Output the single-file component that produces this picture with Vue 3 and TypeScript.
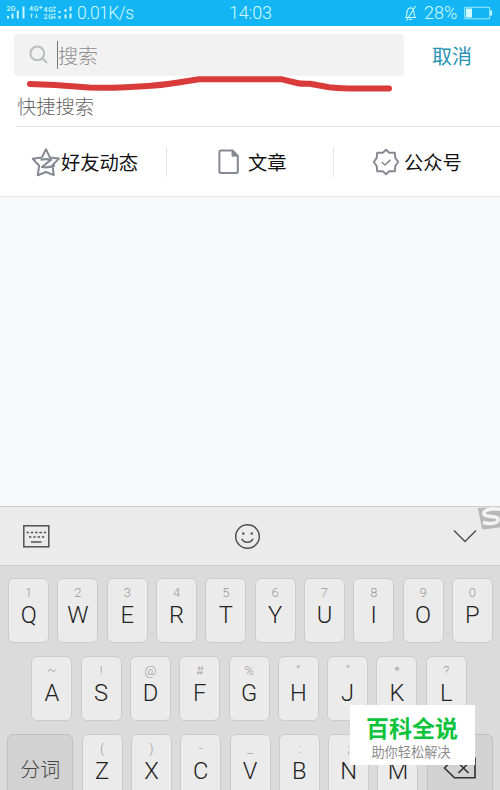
<script setup lang="ts">
interface Key {
  label: string
  hint: string
}

const makeRow = (letters: string, hints: string): Key[] =>
  [...letters].map((label, i) => ({ label, hint: [...hints][i] ?? '' }))

const topRow = makeRow('QWERTYUIOP', '1234567890')
const middleRow = makeRow('ASDFGHJKL', '~!@#%“"*?')
const bottomRow = makeRow('ZXCVBNM', '()-_:;')
</script>

<template>
  <div class="screen">
    <header class="status">
      <svg class="signal" width="71" height="26" viewBox="0 0 71 26">
        <g class="tiny">
          <text x="0.5" y="10.5" textLength="9">2G</text>
          <text x="23" y="11" textLength="9.5">4G</text>
          <text x="37.5" y="11.5" textLength="9.5">4G</text>
          <text x="37.5" y="18.5" textLength="9.5">2G</text>
        </g>
        <path class="arrows" d="M33 7.5h3.6M34.8 5.7v3.6" />
        <g class="bars">
          <path d="M2 16v2.5M6.5 13.5v5M11.8 10.5v8M17.5 6.5v12" />
          <path d="M48.5 6.5v2M48.5 10v1.5M48.5 13.5v1.5M48.5 16.5v2M53.5 11v2M53.5 16v2.5M59.5 9v3M59.5 14.5v4M64.5 6.5v4.5M64.5 13.5v5" />
        </g>
        <path class="arrows" d="M25.5 18v-4m-1.3 1.3 1.3-1.3 1.3 1.3M30.5 14v4m-1.3-1.3 1.3 1.3 1.3-1.3" />
      </svg>
      <span class="speed">0.01K/s</span>
      <span class="clock">14:03</span>
      <svg class="bell" width="15" height="17" viewBox="0 0 15 17">
        <path d="M2 12.5h11M3.3 12C4 10 3.5 5.5 5.3 3.8 6.8 2.4 9 2.7 10 4c1.4 2 .6 6 2 8M6 14.5h3M12.5 1 3.5 15.5" />
      </svg>
      <span class="percent">28%</span>
      <svg class="battery" width="29" height="14" viewBox="0 0 29 14">
        <rect x=".7" y="1.2" width="25" height="11.5" rx="1" class="outline" />
        <rect x="2" y="2.5" width="6" height="9" class="level" />
        <rect x="26.2" y="4.5" width="1.8" height="5" class="level" />
      </svg>
    </header>

    <section class="top">
      <div class="search-row">
        <div class="search-box">
          <svg class="magnifier" width="20" height="20" viewBox="0 0 20 20">
            <circle cx="8.3" cy="8.3" r="6.9" />
            <path d="m13.3 13.3 4.6 4.6" />
          </svg>
          <span class="caret"></span>
          <span class="placeholder">搜索</span>
        </div>
        <span class="cancel">取消</span>
      </div>
      <h2 class="quick">快捷搜索</h2>
      <svg class="scribble" width="380" height="20" viewBox="0 0 380 20">
        <path d="M10 10 35 11 69 13.6Q88 14 106 13.2L128 12Q145 10.8 160 8.2L179 5.2H261L277 9Q281 10 290 9.7L309 13.3Q318 14.5 330 14.4H369" />
      </svg>
    </section>

    <nav class="tabs">
      <a class="tab friends">
        <svg width="30" height="30" viewBox="0 0 30 30">
          <path d="m15 2.2 3.8 8.2 9.1 1.2-6.4 6.5 1.3 10L15 25l-8.3 3.2 1.5-9.5-6.5-7 9.2-1.3z" />
          <path class="zed" d="M9.5 12.8c4-.9 7-.8 10.7-.2L11 20c4 .8 8.3.2 13-1.8" />
        </svg>
        <span>好友动态</span>
      </a>
      <a class="tab article">
        <svg width="22" height="26" viewBox="0 0 22 26">
          <path d="M3.2 1.5h11.3l5.3 5.4v15.4q0 1.8-1.8 1.8H3.2q-1.8 0-1.8-1.8v-19q0-1.8 1.8-1.8z" />
          <path class="fold" d="M14 1.5v5.6h5.8z" />
        </svg>
        <span>文章</span>
      </a>
      <a class="tab official">
        <svg width="28" height="28" viewBox="0 0 28 28">
          <path d="m14 1.8 3.2 2.9h5.6l.5 5.2 2.9 4.1-2.9 4-.5 5.3h-5.6L14 26.2l-3.2-2.9H5.2L4.7 18l-2.9-4 2.9-4.1.5-5.2h5.6z" />
          <path class="tick" d="m9.7 14 3.3 3 5.4-5.2" />
        </svg>
        <span>公众号</span>
      </a>
    </nav>

    <main class="results"></main>

    <section class="keyboard">
      <div class="toolbar">
        <svg class="layout-icon" width="27" height="23" viewBox="0 0 27 23">
          <rect x=".8" y=".8" width="25" height="21" />
          <path d="M3.5 7.5h20" stroke-dasharray="2.4 1.9" />
          <path d="M6 12h15.5" stroke-dasharray="2.4 1.9" />
          <path d="M8 17h10.5" />
        </svg>
        <svg class="smile" width="27" height="27" viewBox="0 0 27 27">
          <circle cx="13.5" cy="13.5" r="11.8" />
          <path d="M7.8 15.7c2 4.6 9 4.6 11.2 0" />
          <circle class="eye" cx="9.3" cy="10.5" r="1.2" />
          <circle class="eye" cx="17.8" cy="10.5" r="1.2" />
        </svg>
        <svg class="chevron" width="24" height="14" viewBox="0 0 24 14">
          <path d="m1 1.5 11 11 11-11" />
        </svg>
        <svg class="brand" width="23" height="25" viewBox="0 0 23 25">
          <path class="badge" d="M0 1 23 0v20L6 22.5q-2 0-2.3-2z" />
          <path class="ess" d="M23 2.5C14 .5 5 3 6 7s14 1 14 5.5c0 4-8 5-15 3" />
        </svg>
      </div>

      <div class="keys">
        <div class="row">
          <div v-for="k in topRow" :key="k.label" class="key">
            <small>{{ k.hint }}</small><b>{{ k.label }}</b>
          </div>
        </div>
        <div class="row">
          <div v-for="k in middleRow" :key="k.label" class="key">
            <small>{{ k.hint }}</small><b>{{ k.label }}</b>
          </div>
        </div>
        <div class="row">
          <div class="key wide">分词</div>
          <div v-for="k in bottomRow" :key="k.label" class="key">
            <small>{{ k.hint }}</small><b>{{ k.label }}</b>
          </div>
          <div class="key wide">
            <svg class="erase" width="34" height="22" viewBox="0 0 34 22">
              <path d="M1.5 11 11.5 1.2H32v19.6H11.5zM15.5 6l10 10M25.5 6l-10 10" />
            </svg>
          </div>
        </div>
      </div>
    </section>

    <aside class="stamp">
      <strong>百科全说</strong>
      <span>助你轻松解决</span>
    </aside>
  </div>
</template>

<style>
body {
  margin: 0;
}
</style>

<style scoped>
* {
  box-sizing: border-box;
}
.screen {
  position: relative;
  display: flex;
  flex-direction: column;
  width: 500px;
  height: 790px;
  overflow: hidden;
  background: #fff;
  font-family: Roboto, "Noto Sans CJK SC", sans-serif;
}
svg {
  display: block;
  flex: none;
  fill: none;
}
.status {
  display: flex;
  align-items: center;
  flex: none;
  height: 26px;
  padding-left: 6px;
  background: #14b5f5;
  color: #d2fbff;
  font-weight: 300;
  font-size: 18px;
  line-height: 26px;
  white-space: nowrap;
}
.tiny {
  fill: #d2fbff;
  font-size: 7px;
  font-weight: 500;
}
.bars {
  stroke: #c9f8ff;
  stroke-width: 2;
}
.arrows {
  stroke: #b4effc;
  stroke-width: 1;
}
.speed {
  width: 152px;
  font-size: 17.5px;
  letter-spacing: -0.5px;
}
.clock {
  width: 174px;
  letter-spacing: -0.2px;
}
.bell {
  stroke: #c9f8ff;
  stroke-width: 1.1;
}
.percent {
  width: 40px;
  margin-left: 6px;
}
.outline {
  stroke: #9ceafa;
  stroke-width: 1.1;
}
.level {
  fill: #d2fbff;
}
.top {
  position: relative;
  flex: none;
  height: 101px;
  padding-top: 8px;
}
.top::after {
  content: "";
  position: absolute;
  left: 16px;
  right: 0;
  bottom: 0;
  height: 1px;
  background: #e3e4e6;
}
.search-row {
  display: flex;
  align-items: center;
  padding-left: 14px;
}
.search-box {
  display: flex;
  align-items: center;
  width: 390px;
  height: 42px;
  padding-left: 15px;
  border-radius: 4px;
  background: #f2f2f2;
}
.magnifier {
  stroke: #b9bcc1;
  stroke-width: 2;
}
.caret {
  width: 1px;
  height: 28px;
  margin-left: 8px;
  background: #777;
}
.placeholder {
  padding-top: 3px;
  color: #8e8e8e;
  font-size: 20px;
  font-weight: 300;
  line-height: 28px;
}
.cancel {
  margin-left: 28px;
  color: #2594b5;
  font-size: 20px;
}
.quick {
  margin: 18px 0 0 17px;
  color: #666;
  font-size: 19.3px;
  font-weight: 300;
  line-height: 28px;
}
.scribble {
  position: absolute;
  left: 20px;
  top: 48px;
}
.scribble path {
  stroke: #d83b3a;
  stroke-width: 6;
  stroke-linecap: round;
  stroke-linejoin: round;
}
.tabs {
  display: grid;
  grid-template-columns: 166px 167px 167px;
  flex: none;
  height: 70px;
  border-bottom: 1px solid #e1e4e7;
}
.tab {
  position: relative;
  display: flex;
  align-items: center;
  color: #111;
  font-size: 19.3px;
}
.tab span {
  padding-top: 1px;
}
.tab + .tab::before {
  content: "";
  position: absolute;
  left: 0;
  top: 20px;
  width: 1px;
  height: 30px;
  background: #e3e4e6;
}
.tab svg {
  stroke: #858991;
  stroke-width: 2;
  stroke-linejoin: round;
}
.friends {
  padding-left: 31px;
}
.friends .zed {
  stroke-width: 2.2;
}
.article {
  padding-left: 52px;
}
.article span {
  margin-left: 8px;
}
.article .fold {
  fill: #858991;
  stroke-width: 1;
}
.official {
  padding-left: 39px;
}
.official span {
  margin-left: 4px;
}
.official .tick {
  stroke-width: 1.6;
}
.results {
  flex: 1;
  background: #f7f9fb;
}
.keyboard {
  flex: none;
  height: 284px;
  border-top: 1px solid #cdcdcd;
  background: #dbdbdb;
}
.toolbar {
  display: flex;
  align-items: center;
  height: 59px;
  padding-left: 23px;
  border-bottom: 1px solid #cbcbcb;
  background: #ebebeb;
  stroke: #505050;
  stroke-width: 1.5;
}
.smile {
  margin-left: 184px;
}
.smile .eye {
  fill: #505050;
  stroke: none;
}
.chevron {
  margin-left: 192px;
}
.brand {
  align-self: flex-start;
  margin-left: 1px;
}
.badge {
  fill: #b8b8b8;
  stroke: none;
}
.ess {
  stroke: #f4f4f4;
  stroke-width: 3.5;
}
.keys {
  display: flex;
  flex-direction: column;
  gap: 13.3px;
  padding-top: 11.5px;
}
.row {
  display: flex;
  justify-content: center;
  gap: 8.3px;
  padding-left: 1px;
}
.row:nth-child(2) {
  padding: 0 2px 0 0;
}
.row:nth-child(3) {
  padding: 0;
}
.key {
  display: flex;
  flex-direction: column;
  align-items: center;
  width: 41px;
  height: 65px;
  padding-top: 6px;
  border: 1px solid #cbcbcb;
  border-radius: 6px;
  background: #ebebeb;
  color: #222;
}
.key small {
  height: 15px;
  color: #999;
  font-size: 13px;
  font-weight: 300;
  line-height: 15px;
}
.key b {
  margin-top: 1px;
  font-size: 23.7px;
  font-weight: 300;
  line-height: 28px;
}
.wide {
  justify-content: center;
  width: 66px;
  padding-top: 3px;
  background: #d2d2d2;
  border-color: #bfbfbf;
  color: #444;
  font-size: 20px;
  font-weight: 300;
}
.erase {
  margin-left: 1px;
  stroke: #303030;
  stroke-width: 1.6;
}
.stamp {
  position: absolute;
  left: 350px;
  top: 705px;
  display: flex;
  flex-direction: column;
  align-items: center;
  width: 125px;
  height: 60px;
  padding: 10px 0 0 1px;
  background: #fff;
  white-space: nowrap;
}
.stamp strong {
  margin-right: 2px;
  color: #0fc43c;
  font-size: 23px;
  font-weight: 700;
  line-height: 30px;
}
.stamp span {
  margin-right: 4px;
  color: #8c8c8c;
  font-size: 13.2px;
  line-height: 16px;
}
</style>
